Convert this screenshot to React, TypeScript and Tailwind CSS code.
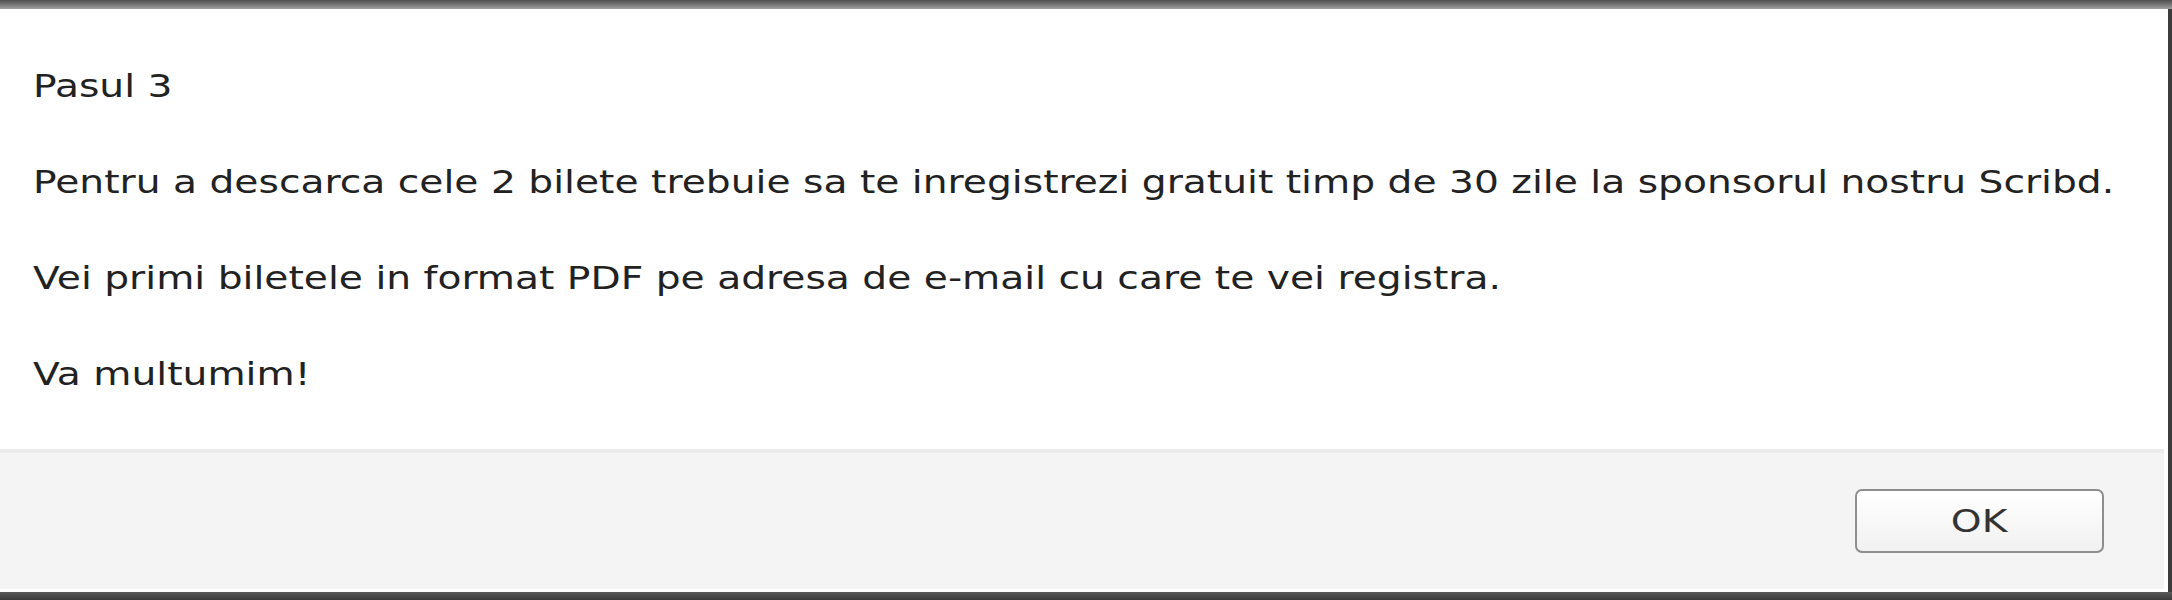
const PARAGRAFE = [
  'Pasul 3',
  'Pentru a descarca cele 2 bilete trebuie sa te inregistrezi gratuit timp de 30 zile la sponsorul nostru Scribd.',
  'Vei primi biletele in format PDF pe adresa de e-mail cu care te vei registra.',
  'Va multumim!'
];

export default function App() {
  return (
    <div
      className="flex h-[600px] w-[2172px] flex-col bg-white text-[#222]"
      style={{ fontFamily: '"DejaVu Sans", Verdana, sans-serif' }}
    >
      {/* bara de sus a ferestrei */}
      <div className="h-[9px] bg-gradient-to-b from-[#4e4e4e] to-[#a0a0a0]" />

      <div className="flex flex-1">
        <div className="flex flex-1 flex-col pb-[3px] pr-[4px]">
          <div className="flex flex-1 flex-col items-start gap-[48px] pl-[33px] pt-[53px]">
            {PARAGRAFE.map((text) => (
              <p key={text} className="origin-left scale-x-[1.225] whitespace-nowrap text-[32px] leading-[48px]">
                {text}
              </p>
            ))}
          </div>

          <div className="flex h-[140px] items-center justify-end border-t-[4px] border-[#ebebeb] bg-[#f4f4f4] pr-[60px]">
            <button className="flex h-[64px] w-[249px] items-center justify-center rounded-[7px] border-2 border-[#8e8e8e] bg-gradient-to-b from-white to-[#f1f1f1] text-[32px] text-[#333]">
              <span className="scale-x-[1.225]">OK</span>
            </button>
          </div>
        </div>
        <div className="w-[4px] bg-[#3c3c3c]" />
      </div>

      <div className="h-[8px] bg-gradient-to-b from-[#5a5a5a] to-[#3a3a3a]" />
    </div>
  );
}
